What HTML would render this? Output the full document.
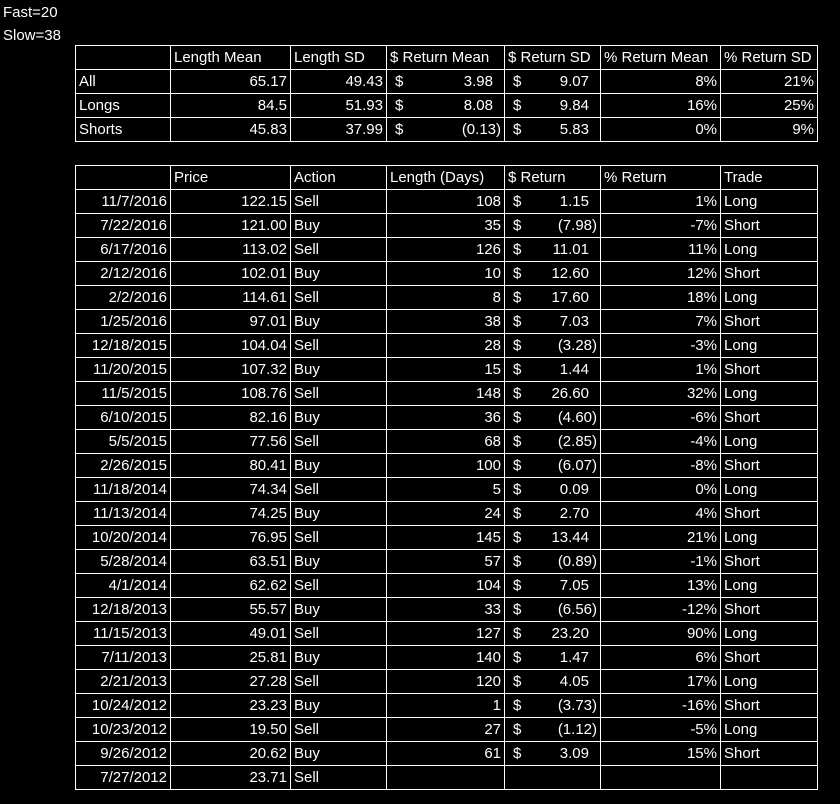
<!DOCTYPE html>
<html><head><meta charset="utf-8"><style>
body{margin:0;background:#000;width:840px;height:804px;overflow:hidden;color:#fff;font-family:"Liberation Sans",sans-serif;font-size:15px;position:relative}
.t{position:absolute;left:75px;border-collapse:collapse;table-layout:fixed}
.t td{border:1px solid #fff;height:23px;padding:1px 3px 0 3px;white-space:nowrap;overflow:hidden;line-height:22px;box-sizing:border-box}
.r{text-align:right}
.d{padding:1px 3px 0 8px!important}
.d span{float:right}
.d span.p{padding-right:8px}
.lbl{position:absolute;left:3px}
</style></head><body>
<div class="lbl" style="top:4px">Fast=20</div>
<div class="lbl" style="top:27px">Slow=38</div>
<table class="t" style="top:45px">
<colgroup><col style="width:95px"><col style="width:120px"><col style="width:96px"><col style="width:118px"><col style="width:96px"><col style="width:120px"><col style="width:97px"></colgroup>
<tr><td></td><td>Length Mean</td><td>Length SD</td><td>$ Return Mean</td><td>$ Return SD</td><td>% Return Mean</td><td>% Return SD</td></tr>
<tr><td>All</td><td class="r">65.17</td><td class="r">49.43</td><td class="d">$<span class="p">3.98</span></td><td class="d">$<span class="p">9.07</span></td><td class="r">8%</td><td class="r">21%</td></tr>
<tr><td>Longs</td><td class="r">84.5</td><td class="r">51.93</td><td class="d">$<span class="p">8.08</span></td><td class="d">$<span class="p">9.84</span></td><td class="r">16%</td><td class="r">25%</td></tr>
<tr><td>Shorts</td><td class="r">45.83</td><td class="r">37.99</td><td class="d">$<span>(0.13)</span></td><td class="d">$<span class="p">5.83</span></td><td class="r">0%</td><td class="r">9%</td></tr>
</table>
<table class="t" style="top:165px">
<colgroup><col style="width:95px"><col style="width:120px"><col style="width:96px"><col style="width:118px"><col style="width:96px"><col style="width:120px"><col style="width:97px"></colgroup>
<tr><td></td><td>Price</td><td>Action</td><td>Length (Days)</td><td>$ Return</td><td>% Return</td><td>Trade</td></tr>
<tr><td class="r">11/7/2016</td><td class="r">122.15</td><td>Sell</td><td class="r">108</td><td class="d">$<span class="p">1.15</span></td><td class="r">1%</td><td>Long</td></tr>
<tr><td class="r">7/22/2016</td><td class="r">121.00</td><td>Buy</td><td class="r">35</td><td class="d">$<span>(7.98)</span></td><td class="r">-7%</td><td>Short</td></tr>
<tr><td class="r">6/17/2016</td><td class="r">113.02</td><td>Sell</td><td class="r">126</td><td class="d">$<span class="p">11.01</span></td><td class="r">11%</td><td>Long</td></tr>
<tr><td class="r">2/12/2016</td><td class="r">102.01</td><td>Buy</td><td class="r">10</td><td class="d">$<span class="p">12.60</span></td><td class="r">12%</td><td>Short</td></tr>
<tr><td class="r">2/2/2016</td><td class="r">114.61</td><td>Sell</td><td class="r">8</td><td class="d">$<span class="p">17.60</span></td><td class="r">18%</td><td>Long</td></tr>
<tr><td class="r">1/25/2016</td><td class="r">97.01</td><td>Buy</td><td class="r">38</td><td class="d">$<span class="p">7.03</span></td><td class="r">7%</td><td>Short</td></tr>
<tr><td class="r">12/18/2015</td><td class="r">104.04</td><td>Sell</td><td class="r">28</td><td class="d">$<span>(3.28)</span></td><td class="r">-3%</td><td>Long</td></tr>
<tr><td class="r">11/20/2015</td><td class="r">107.32</td><td>Buy</td><td class="r">15</td><td class="d">$<span class="p">1.44</span></td><td class="r">1%</td><td>Short</td></tr>
<tr><td class="r">11/5/2015</td><td class="r">108.76</td><td>Sell</td><td class="r">148</td><td class="d">$<span class="p">26.60</span></td><td class="r">32%</td><td>Long</td></tr>
<tr><td class="r">6/10/2015</td><td class="r">82.16</td><td>Buy</td><td class="r">36</td><td class="d">$<span>(4.60)</span></td><td class="r">-6%</td><td>Short</td></tr>
<tr><td class="r">5/5/2015</td><td class="r">77.56</td><td>Sell</td><td class="r">68</td><td class="d">$<span>(2.85)</span></td><td class="r">-4%</td><td>Long</td></tr>
<tr><td class="r">2/26/2015</td><td class="r">80.41</td><td>Buy</td><td class="r">100</td><td class="d">$<span>(6.07)</span></td><td class="r">-8%</td><td>Short</td></tr>
<tr><td class="r">11/18/2014</td><td class="r">74.34</td><td>Sell</td><td class="r">5</td><td class="d">$<span class="p">0.09</span></td><td class="r">0%</td><td>Long</td></tr>
<tr><td class="r">11/13/2014</td><td class="r">74.25</td><td>Buy</td><td class="r">24</td><td class="d">$<span class="p">2.70</span></td><td class="r">4%</td><td>Short</td></tr>
<tr><td class="r">10/20/2014</td><td class="r">76.95</td><td>Sell</td><td class="r">145</td><td class="d">$<span class="p">13.44</span></td><td class="r">21%</td><td>Long</td></tr>
<tr><td class="r">5/28/2014</td><td class="r">63.51</td><td>Buy</td><td class="r">57</td><td class="d">$<span>(0.89)</span></td><td class="r">-1%</td><td>Short</td></tr>
<tr><td class="r">4/1/2014</td><td class="r">62.62</td><td>Sell</td><td class="r">104</td><td class="d">$<span class="p">7.05</span></td><td class="r">13%</td><td>Long</td></tr>
<tr><td class="r">12/18/2013</td><td class="r">55.57</td><td>Buy</td><td class="r">33</td><td class="d">$<span>(6.56)</span></td><td class="r">-12%</td><td>Short</td></tr>
<tr><td class="r">11/15/2013</td><td class="r">49.01</td><td>Sell</td><td class="r">127</td><td class="d">$<span class="p">23.20</span></td><td class="r">90%</td><td>Long</td></tr>
<tr><td class="r">7/11/2013</td><td class="r">25.81</td><td>Buy</td><td class="r">140</td><td class="d">$<span class="p">1.47</span></td><td class="r">6%</td><td>Short</td></tr>
<tr><td class="r">2/21/2013</td><td class="r">27.28</td><td>Sell</td><td class="r">120</td><td class="d">$<span class="p">4.05</span></td><td class="r">17%</td><td>Long</td></tr>
<tr><td class="r">10/24/2012</td><td class="r">23.23</td><td>Buy</td><td class="r">1</td><td class="d">$<span>(3.73)</span></td><td class="r">-16%</td><td>Short</td></tr>
<tr><td class="r">10/23/2012</td><td class="r">19.50</td><td>Sell</td><td class="r">27</td><td class="d">$<span>(1.12)</span></td><td class="r">-5%</td><td>Long</td></tr>
<tr><td class="r">9/26/2012</td><td class="r">20.62</td><td>Buy</td><td class="r">61</td><td class="d">$<span class="p">3.09</span></td><td class="r">15%</td><td>Short</td></tr>
<tr><td class="r">7/27/2012</td><td class="r">23.71</td><td>Sell</td><td></td><td></td><td></td><td></td></tr>
</table>
</body></html>
